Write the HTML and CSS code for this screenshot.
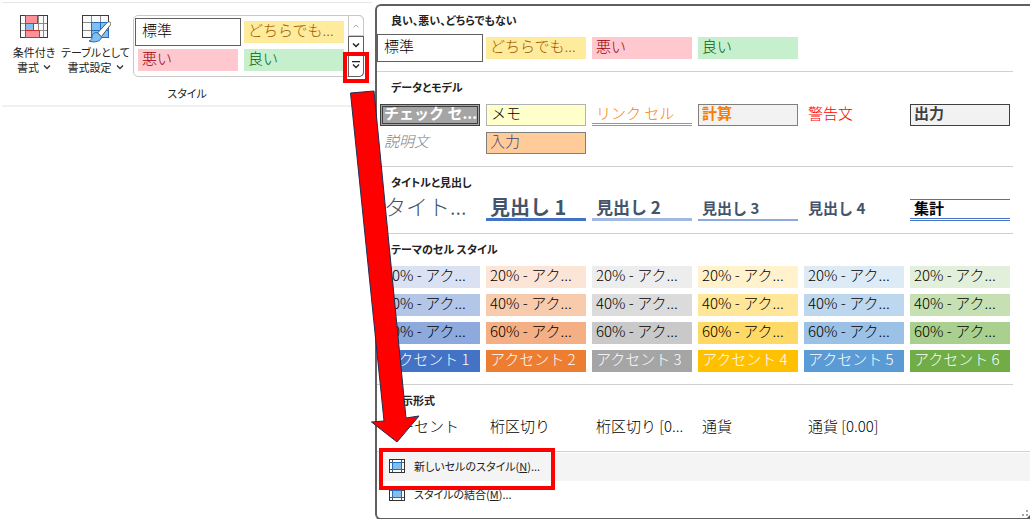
FILE: index.html
```html
<!DOCTYPE html>
<html lang="ja">
<head>
<meta charset="utf-8">
<title>セルのスタイル</title>
<link rel="stylesheet" href="styles.css">
</head>
<body>
<main class="app">
  <section class="ribbon" aria-label="スタイル">
    <div class="ribbon-group">
      <button class="tool tool-cond" type="button">
        <svg class="tool-icon" width="30" height="28" viewBox="0 0 30 28">
          <rect x="1.500" y="1.500" width="27" height="21" fill="#fafafa"/>
          <path d="M19.500 1v22M24.500 1v22M1 8.500h27M1 15.500h27" stroke="#8a8a8a" fill="none"/>
          <rect x="1.500" y=".5" width="27" height="22" fill="none" stroke="#3b3b3b"/>
          <path d="M6.500 1v22" stroke="#3b3b3b"/>
          <rect x="6.500" y=".5" width="12" height="8" fill="#ff9299" stroke="#d92c2c"/>
          <rect x="6.500" y="8.500" width="8" height="7" fill="#83beec" stroke="#1e6fbf"/>
          <rect x="6.500" y="15.500" width="14" height="7" fill="#ff9299" stroke="#d92c2c"/>
        </svg>
        <span>条件付き</span>
        <span>書式<svg class="caret" width="8" height="6" viewBox="0 0 8 6"><path d="M1 1.500l3 3 3-3" fill="none" stroke="#333" stroke-width="1.300"/></svg></span>
      </button>
      <button class="tool tool-table" type="button">
        <svg class="tool-icon" width="30" height="28" viewBox="0 0 30 28">
          <rect x="1.500" y=".5" width="26" height="22" fill="#fafafa" stroke="#3b3b3b"/>
          <rect x="10" y="7" width="18" height="15" fill="#83beec"/>
          <path d="M10.500 1v6M19.500 1v6M2 7.500h8M2 15.500h8" stroke="#8a8a8a" fill="none"/>
          <path d="M10 7.500h17.500v15H10.500v-15M10.500 15.500h17M19.500 8v14" stroke="#1e6fbf" fill="none"/>
          <path d="M29.500 7.500c-1.500-1.500-3-.5-4 .7L16.500 18l4 3.500L29 10.500c.8-1 1.200-2 .5-3z" fill="#fff" stroke="#555"/>
          <path d="M16 17.500c-3.500 0-5 2-5 4.500 0 2-1 3.200-3 4 5 2 12.500.8 12.500-4.500z" fill="#83beec" stroke="#1e6fbf"/>
        </svg>
        <span>テーブルとして</span>
        <span>書式設定<svg class="caret" width="8" height="6" viewBox="0 0 8 6"><path d="M1 1.500l3 3 3-3" fill="none" stroke="#333" stroke-width="1.300"/></svg></span>
      </button>
      <div class="gallery">
        <div class="gallery-cells">
          <button class="cell selected" type="button">標準</button>
          <button class="cell neutral" type="button">どちらでも...</button>
          <button class="cell bad" type="button">悪い</button>
          <button class="cell good" type="button">良い</button>
        </div>
        <div class="gallery-scroll">
          <button class="scroll-up" type="button" aria-label="上へ"><svg width="8" height="6" viewBox="0 0 8 6"><path d="M1.500 4.500l2.500-2.500 2.500 2.500" fill="none" stroke="#aaa"/></svg></button>
          <button class="scroll-down" type="button" aria-label="下へ"><svg width="8" height="6" viewBox="0 0 8 6"><path d="M1 1.500l3 3 3-3" fill="none" stroke="#222" stroke-width="1.500"/></svg></button>
          <button class="scroll-more" type="button" aria-label="その他"><svg width="8" height="8" viewBox="0 0 8 8"><path d="M0 .5h8M1 3.500l3 3 3-3" fill="none" stroke="#222" stroke-width="1.300"/></svg></button>
        </div>
      </div>
    </div>
    <div class="ribbon-label">スタイル</div>
  </section>

  <section class="panel" aria-label="セルのスタイルの一覧">
    <div class="group group-first">
      <h2>良い、悪い、どちらでもない</h2>
      <div class="cells">
        <button class="cell selected" type="button">標準</button>
        <button class="cell neutral" type="button">どちらでも...</button>
        <button class="cell bad" type="button">悪い</button>
        <button class="cell good" type="button">良い</button>
      </div>
    </div>
    <div class="group">
      <h2>データとモデル</h2>
      <div class="cells">
        <button class="cell check" type="button">チェック セ...</button>
        <button class="cell memo" type="button">メモ</button>
        <button class="cell linked" type="button">リンク セル</button>
        <button class="cell calc" type="button">計算</button>
        <button class="cell warning" type="button">警告文</button>
        <button class="cell output" type="button">出力</button>
        <button class="cell explain" type="button">説明文</button>
        <button class="cell entry" type="button">入力</button>
      </div>
    </div>
    <div class="group">
      <h2>タイトルと見出し</h2>
      <div class="cells">
        <button class="cell title" type="button">タイト...</button>
        <button class="cell head1" type="button">見出し 1</button>
        <button class="cell head2" type="button">見出し 2</button>
        <button class="cell head3" type="button">見出し 3</button>
        <button class="cell head4" type="button">見出し 4</button>
        <button class="cell total" type="button">集計</button>
      </div>
    </div>
    <div class="group">
      <h2>テーマのセル スタイル</h2>
      <div class="cells">
        <button class="cell a1-20" type="button">20% - アク...</button>
        <button class="cell a2-20" type="button">20% - アク...</button>
        <button class="cell a3-20" type="button">20% - アク...</button>
        <button class="cell a4-20" type="button">20% - アク...</button>
        <button class="cell a5-20" type="button">20% - アク...</button>
        <button class="cell a6-20" type="button">20% - アク...</button>
        <button class="cell a1-40" type="button">40% - アク...</button>
        <button class="cell a2-40" type="button">40% - アク...</button>
        <button class="cell a3-40" type="button">40% - アク...</button>
        <button class="cell a4-40" type="button">40% - アク...</button>
        <button class="cell a5-40" type="button">40% - アク...</button>
        <button class="cell a6-40" type="button">40% - アク...</button>
        <button class="cell a1-60" type="button">60% - アク...</button>
        <button class="cell a2-60" type="button">60% - アク...</button>
        <button class="cell a3-60" type="button">60% - アク...</button>
        <button class="cell a4-60" type="button">60% - アク...</button>
        <button class="cell a5-60" type="button">60% - アク...</button>
        <button class="cell a6-60" type="button">60% - アク...</button>
        <button class="cell accent a1" type="button">アクセント 1</button>
        <button class="cell accent a2" type="button">アクセント 2</button>
        <button class="cell accent a3" type="button">アクセント 3</button>
        <button class="cell accent a4" type="button">アクセント 4</button>
        <button class="cell accent a5" type="button">アクセント 5</button>
        <button class="cell accent a6" type="button">アクセント 6</button>
      </div>
    </div>
    <div class="group group-last">
      <h2>表示形式</h2>
      <div class="cells">
        <button class="cell" type="button">パーセント</button>
        <button class="cell" type="button">桁区切り</button>
        <button class="cell" type="button">桁区切り [0...</button>
        <button class="cell" type="button">通貨</button>
        <button class="cell" type="button">通貨 [0.00]</button>
      </div>
    </div>
    <div class="menu">
      <button class="menu-item hovered" type="button">
        <svg width="16" height="14" viewBox="0 0 16 14"><rect x=".5" y=".5" width="15" height="13" fill="#fff" stroke="#333"/><path d="M3.500 1v12M12.500 1v12M1 3.500h14M1 10.500h14" stroke="#555"/><rect x="3.500" y="3.500" width="9" height="7" fill="#83beec" stroke="#1e6fbf"/></svg>
        <span>新しいセルのスタイル(<u>N</u>)...</span>
      </button>
      <button class="menu-item" type="button">
        <svg width="16" height="14" viewBox="0 0 16 14"><rect x=".5" y=".5" width="15" height="13" fill="#fff" stroke="#333"/><path d="M3.500 1v12M12.500 1v12M1 3.500h14M1 10.500h14" stroke="#555"/><rect x="3.500" y="3.500" width="9" height="7" fill="#83beec" stroke="#1e6fbf"/></svg>
        <span>スタイルの結合(<u>M</u>)...</span>
      </button>
    </div>
    <svg class="grip" width="9" height="9" viewBox="0 0 9 9"><path d="M5 1h2v2H5zM1 5h2v2H1zM5 5h2v2H5z" fill="#a6a6a6"/><path d="M9 6v3H6z" fill="#555"/></svg>
  </section>

  <div class="mark mark-more"></div>
  <div class="mark mark-new"></div>
  <svg class="arrow" width="72" height="356" viewBox="0 0 72 356"><path d="M2.500 5L26 3 58 330l13-2-22 26-25.500-20 12.500-1z" fill="#f00" stroke="#1c3052"/></svg>
</main>
</body>
</html>
```
FILE: styles.css
```css
* {
  box-sizing: border-box;
}

body {
  margin: 0;
  background: #fff;
  color: #222;
  font-family: "Noto Sans CJK JP", sans-serif;
  font-size: 11px;
}

button {
  margin: 0;
  padding: 0;
  border: 0;
  background: none;
  color: inherit;
  font: inherit;
  text-align: left;
}

.app {
  position: relative;
  display: flex;
  align-items: flex-start;
  min-height: 100vh;
  overflow: hidden;
}

/* Ribbon */
.ribbon {
  flex: 0 0 370px;
  margin: 2px 3px 0 2px;
  border-top: 1px solid #e6e6e6;
  border-bottom: 2px solid #f0f0f0;
  font-feature-settings: "palt";
}

.ribbon-group {
  display: flex;
  align-items: flex-start;
  padding: 12px 0 0 8px;
}

.tool {
  display: flex;
  flex-direction: column;
  align-items: center;
  line-height: 15px;
  white-space: nowrap;
}

.tool-cond {
  width: 48px;
}

.tool-table {
  width: 75px;
}

.tool-icon {
  margin-bottom: 2px;
}

.caret {
  margin: 0 0 2px 4px;
}

.gallery {
  display: flex;
  width: 231px;
  height: 62px;
  border: 1px solid #c8c8c8;
  border-radius: 5px;
}

.gallery-cells {
  display: grid;
  flex: 1;
  grid-template-columns: repeat(2, 100px);
  gap: 6px;
  align-content: start;
  padding: 5px 4px;
}

.gallery-scroll {
  display: flex;
  flex-direction: column;
  width: 16px;
  margin: -1px;
}

.gallery-scroll button {
  display: flex;
  flex: 1;
  align-items: center;
  justify-content: center;
  border: 1px solid #606060;
}

.gallery-scroll .scroll-up {
  flex: 0 0 21px;
  border-color: #c8c8c8;
  border-radius: 0 5px 0 0;
}

.gallery-scroll .scroll-more {
  flex: 0 0 24px;
  border-top: 0;
  border-radius: 0 0 5px 0;
}

.ribbon-label {
  padding: 8px 0 3px;
  line-height: 17px;
  text-align: center;
}

/* Style cells */
.cell {
  display: flex;
  align-items: flex-start;
  height: 22px;
  padding: 0 0 0 4px;
  color: #000;
  font-size: 15px;
  font-weight: 300;
  font-feature-settings: normal;
  line-height: 17px;
  white-space: nowrap;
}

.selected { outline: 1px solid #606060; outline-offset: 2px; }
.neutral { background: #ffeb9c; color: #9c5700; }
.bad { background: #ffc7ce; color: #9c0006; }
.good { background: #c6efce; color: #006100; }

.check { padding-left: 1px; border: 3px double #3f3f3f; background: #a5a5a5; color: #fff; font-weight: 700; line-height: 11px; }
.memo { border: 1px solid #b2b2b2; background: #ffffcc; line-height: 15px; }
.linked { border-bottom: 3px double #ff8001; color: #fa7d00; }
.calc { padding-left: 3px; border: 1px solid #7f7f7f; background: #f2f2f2; color: #fa7d00; font-weight: 700; line-height: 15px; }
.warning { color: #f00; }
.output { padding-left: 3px; border: 1px solid #3f3f3f; background: #f2f2f2; color: #3f3f3f; font-weight: 700; line-height: 15px; }
.explain { color: #7f7f7f; font-style: italic; }
.entry { padding-left: 3px; border: 1px solid #7f7f7f; background: #ffcc99; color: #3f3f76; line-height: 15px; }

.title { color: #44546a; font-size: 22px; line-height: 13px; }
.head1, .head2, .head3, .head4, .total { font-weight: 700; }
.head1, .head2, .head3, .head4 { color: #44546a; }
.head1 { border-bottom: 3px solid #4472c4; font-size: 20px; line-height: 15px; }
.head2 { border-bottom: 3px solid #a1b8e1; font-size: 17px; line-height: 16px; }
.head3 { border-bottom: 2px solid #8ea9db; }
.total { border-top: 1px solid #4472c4; border-bottom: 3px double #4472c4; line-height: 15px; }

.a1-20 { background: #d9e1f2; }
.a2-20 { background: #fce4d6; }
.a3-20 { background: #ededed; }
.a4-20 { background: #fff2cc; }
.a5-20 { background: #ddebf7; }
.a6-20 { background: #e2efda; }
.a1-40 { background: #b4c6e7; }
.a2-40 { background: #f8cbad; }
.a3-40 { background: #dbdbdb; }
.a4-40 { background: #ffe699; }
.a5-40 { background: #bdd7ee; }
.a6-40 { background: #c6e0b4; }
.a1-60 { background: #8ea9db; }
.a2-60 { background: #f4b084; }
.a3-60 { background: #c9c9c9; }
.a4-60 { background: #ffd966; }
.a5-60 { background: #9bc2e6; }
.a6-60 { background: #a9d08e; }
.accent { color: #fff; }
.a1 { background: #4472c4; }
.a2 { background: #ed7d31; }
.a3 { background: #a5a5a5; }
.a4 { background: #ffc000; }
.a5 { background: #5b9bd5; }
.a6 { background: #70ad47; }

/* Drop-down panel */
.panel {
  position: relative;
  flex: 1;
  min-width: 0;
  margin-top: 4px;
  padding-bottom: 9px;
  border: 2px solid #606060;
  border-right: 0;
  border-radius: 6px 0 0 6px;
  background: #fff;
}

.group {
  margin-right: 17px;
  padding: 0 0 12px 3px;
  border-bottom: 1px solid #d0d0d0;
}

.group h2 {
  margin: 0;
  padding: 5px 0 7px 11px;
  font-size: 11px;
  font-weight: 700;
  font-feature-settings: "palt";
  line-height: 20px;
}

.group-first h2 {
  padding-top: 4px;
}

.group-last {
  margin-right: 0;
}

.cells {
  display: grid;
  grid-template-columns: repeat(6, minmax(0, 100px));
  gap: 6px;
}

.menu {
  padding-top: 1px;
}

.menu-item {
  display: flex;
  align-items: center;
  gap: 9px;
  width: 100%;
  height: 28px;
  padding: 0 0 2px 12px;
  font-feature-settings: "palt";
}

.hovered {
  background: #f4f4f4;
}

.grip {
  position: absolute;
  right: 0;
  bottom: 0;
}

/* Callouts over the interface */
.mark {
  position: absolute;
  border: 4px solid #f00;
}

.mark-more {
  top: 52px;
  left: 343px;
  width: 26px;
  height: 31px;
}

.mark-new {
  top: 448px;
  left: 379px;
  width: 176px;
  height: 42px;
}

.arrow {
  position: absolute;
  top: 88px;
  left: 348px;
}
```
